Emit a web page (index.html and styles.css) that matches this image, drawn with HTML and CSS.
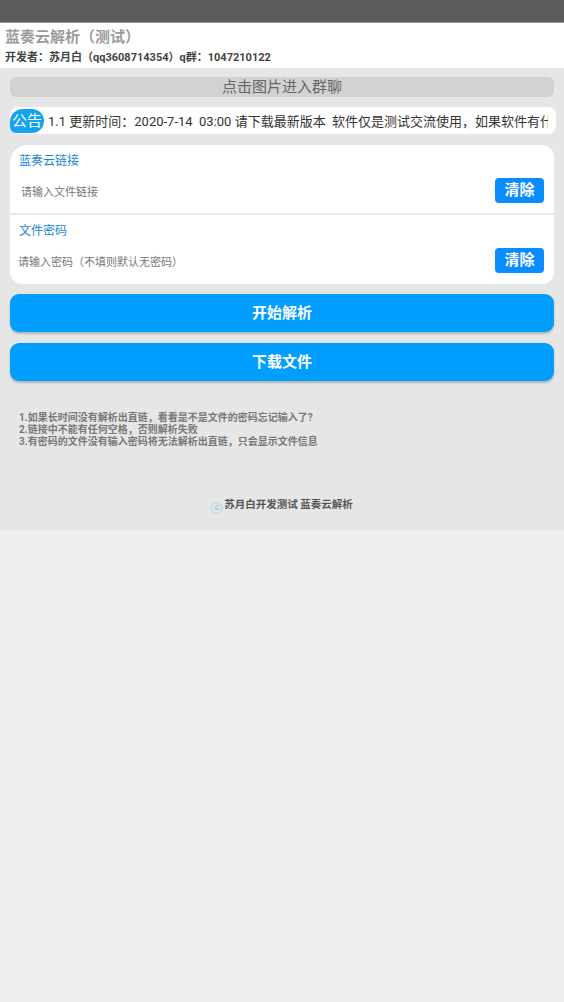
FILE: index.html
```html
<!DOCTYPE html>
<html lang="zh">
<head>
<meta charset="utf-8">
<title>蓝奏云解析（测试）</title>
<link rel="stylesheet" href="styles.css">
</head>
<body>
<div class="statusbar"></div>
<header class="header">
  <div class="title">蓝奏云解析（测试）</div>
  <div class="subtitle">开发者：苏月白（qq3608714354）q群：1047210122</div>
</header>
<main class="panel">
  <div class="banner">点击图片进入群聊</div>
  <div class="notice">
    <span class="badge">公告</span>
    <div class="notice-text">1.1 更新时间：2020-7-14&nbsp;&nbsp;03:00 请下载最新版本&nbsp;&nbsp;软件仅是测试交流使用，如果软件有什么</div>
  </div>
  <div class="card">
    <div class="section">
      <div class="label">蓝奏云链接</div>
      <div class="row">
        <span class="placeholder p1">请输入文件链接</span>
        <span class="clear">清除</span>
      </div>
    </div>
    <div class="divider"></div>
    <div class="section last">
      <div class="label">文件密码</div>
      <div class="row">
        <span class="placeholder p2">请输入密码（不填则默认无密码）</span>
        <span class="clear">清除</span>
      </div>
    </div>
  </div>
  <div class="btn first">开始解析</div>
  <div class="btn second">下载文件</div>
  <div class="notes">
    <div>1.如果长时间没有解析出直链，看看是不是文件的密码忘记输入了?</div>
    <div>2.链接中不能有任何空格，否则解析失败</div>
    <div>3.有密码的文件没有输入密码将无法解析出直链，只会显示文件信息</div>
  </div>
  <div class="footer"><span class="copy">C</span>苏月白开发测试 蓝奏云解析</div>
</main>
</body>
</html>
```
FILE: styles.css
```css
* { box-sizing: border-box; }
html, body { margin: 0; padding: 0; }
body {
  background: #eeeeee;
  font-family: Roboto, "Noto Sans CJK SC", "Noto Sans", sans-serif;
  width: 564px;
}
.statusbar {
  height: 23px;
  background: #5c5c5c;
  border-bottom: 1px solid #9a9a9a;
}
.header {
  background: #ffffff;
  height: 45px;
  padding: 4px 5px 0;
}
.title {
  font-size: 15px;
  line-height: 20px;
  font-weight: bold;
  color: #9b9b9b;
}
.subtitle {
  margin-top: 3px;
  font-size: 11px;
  line-height: 16px;
  font-weight: bold;
  color: #444444;
}
.panel {
  background: #e6e6e6;
  padding: 9px 10px 0;
  height: 463px;
}
.banner {
  height: 20px;
  background: #d2d2d2;
  border-radius: 6px;
  text-align: center;
  font-size: 15px;
  line-height: 21px;
  color: #666666;
}
.notice {
  margin-top: 10px;
  height: 27px;
  background: #ffffff;
  border-radius: 8px;
  display: flex;
  align-items: center;
  padding-right: 8px;
  width: 546px;
}
.badge {
  flex: none;
  width: 34px;
  height: 24px;
  background: #13a3f0;
  color: #ffffff;
  border-radius: 13px 12px 12px 6px;
  font-size: 15px;
  line-height: 24px;
  text-align: center;
}
.notice-text {
  margin-left: 4px;
  flex: 1;
  overflow: hidden;
  white-space: nowrap;
  font-size: 13px;
  color: #333333;
}
.card {
  margin-top: 11px;
  background: #ffffff;
  border-radius: 18px 12px 12px 12px;
  overflow: hidden;
}
.section {
  padding: 8px 10px 10px 9px;
}
.section.last {
  padding-bottom: 11px;
}
.label {
  font-size: 12px;
  line-height: 16px;
  color: #1a86d6;
}
.row {
  margin-top: 9px;
  height: 25px;
  display: flex;
  align-items: center;
  justify-content: space-between;
}
.placeholder {
  font-size: 11px;
  color: #777777;
}
.p1 { margin-left: 2px; }
.p2 { margin-left: -1px; }
.clear {
  width: 49px;
  height: 25px;
  background: #0a8cff;
  color: #ffffff;
  border-radius: 4px;
  font-size: 15px;
  font-weight: bold;
  line-height: 25px;
  text-align: center;
}
.divider {
  height: 2px;
  background: #e8e8e8;
}
.btn {
  height: 38px;
  background: #009eff;
  border-radius: 9px;
  box-shadow: 0 2px 2px rgba(0, 0, 0, 0.22);
  color: #ffffff;
  font-size: 15px;
  font-weight: bold;
  line-height: 38px;
  text-align: center;
}
.first { margin-top: 10px; }
.second { margin-top: 11px; }
.notes {
  margin-top: 31px;
  padding-left: 9px;
  font-size: 10px;
  line-height: 12px;
  font-weight: bold;
  color: #787878;
}
.footer {
  margin-top: 50px;
  text-align: center;
  font-size: 10.5px;
  line-height: 14px;
  font-weight: bold;
  color: #555555;
}
.copy {
  display: inline-block;
  width: 12px;
  height: 12px;
  border: 1.5px solid #a6d9f0;
  border-radius: 50%;
  color: #8fcde9;
  font-size: 8px;
  line-height: 9px;
  text-align: center;
  vertical-align: -2px;
  margin-right: 1px;
}
```
